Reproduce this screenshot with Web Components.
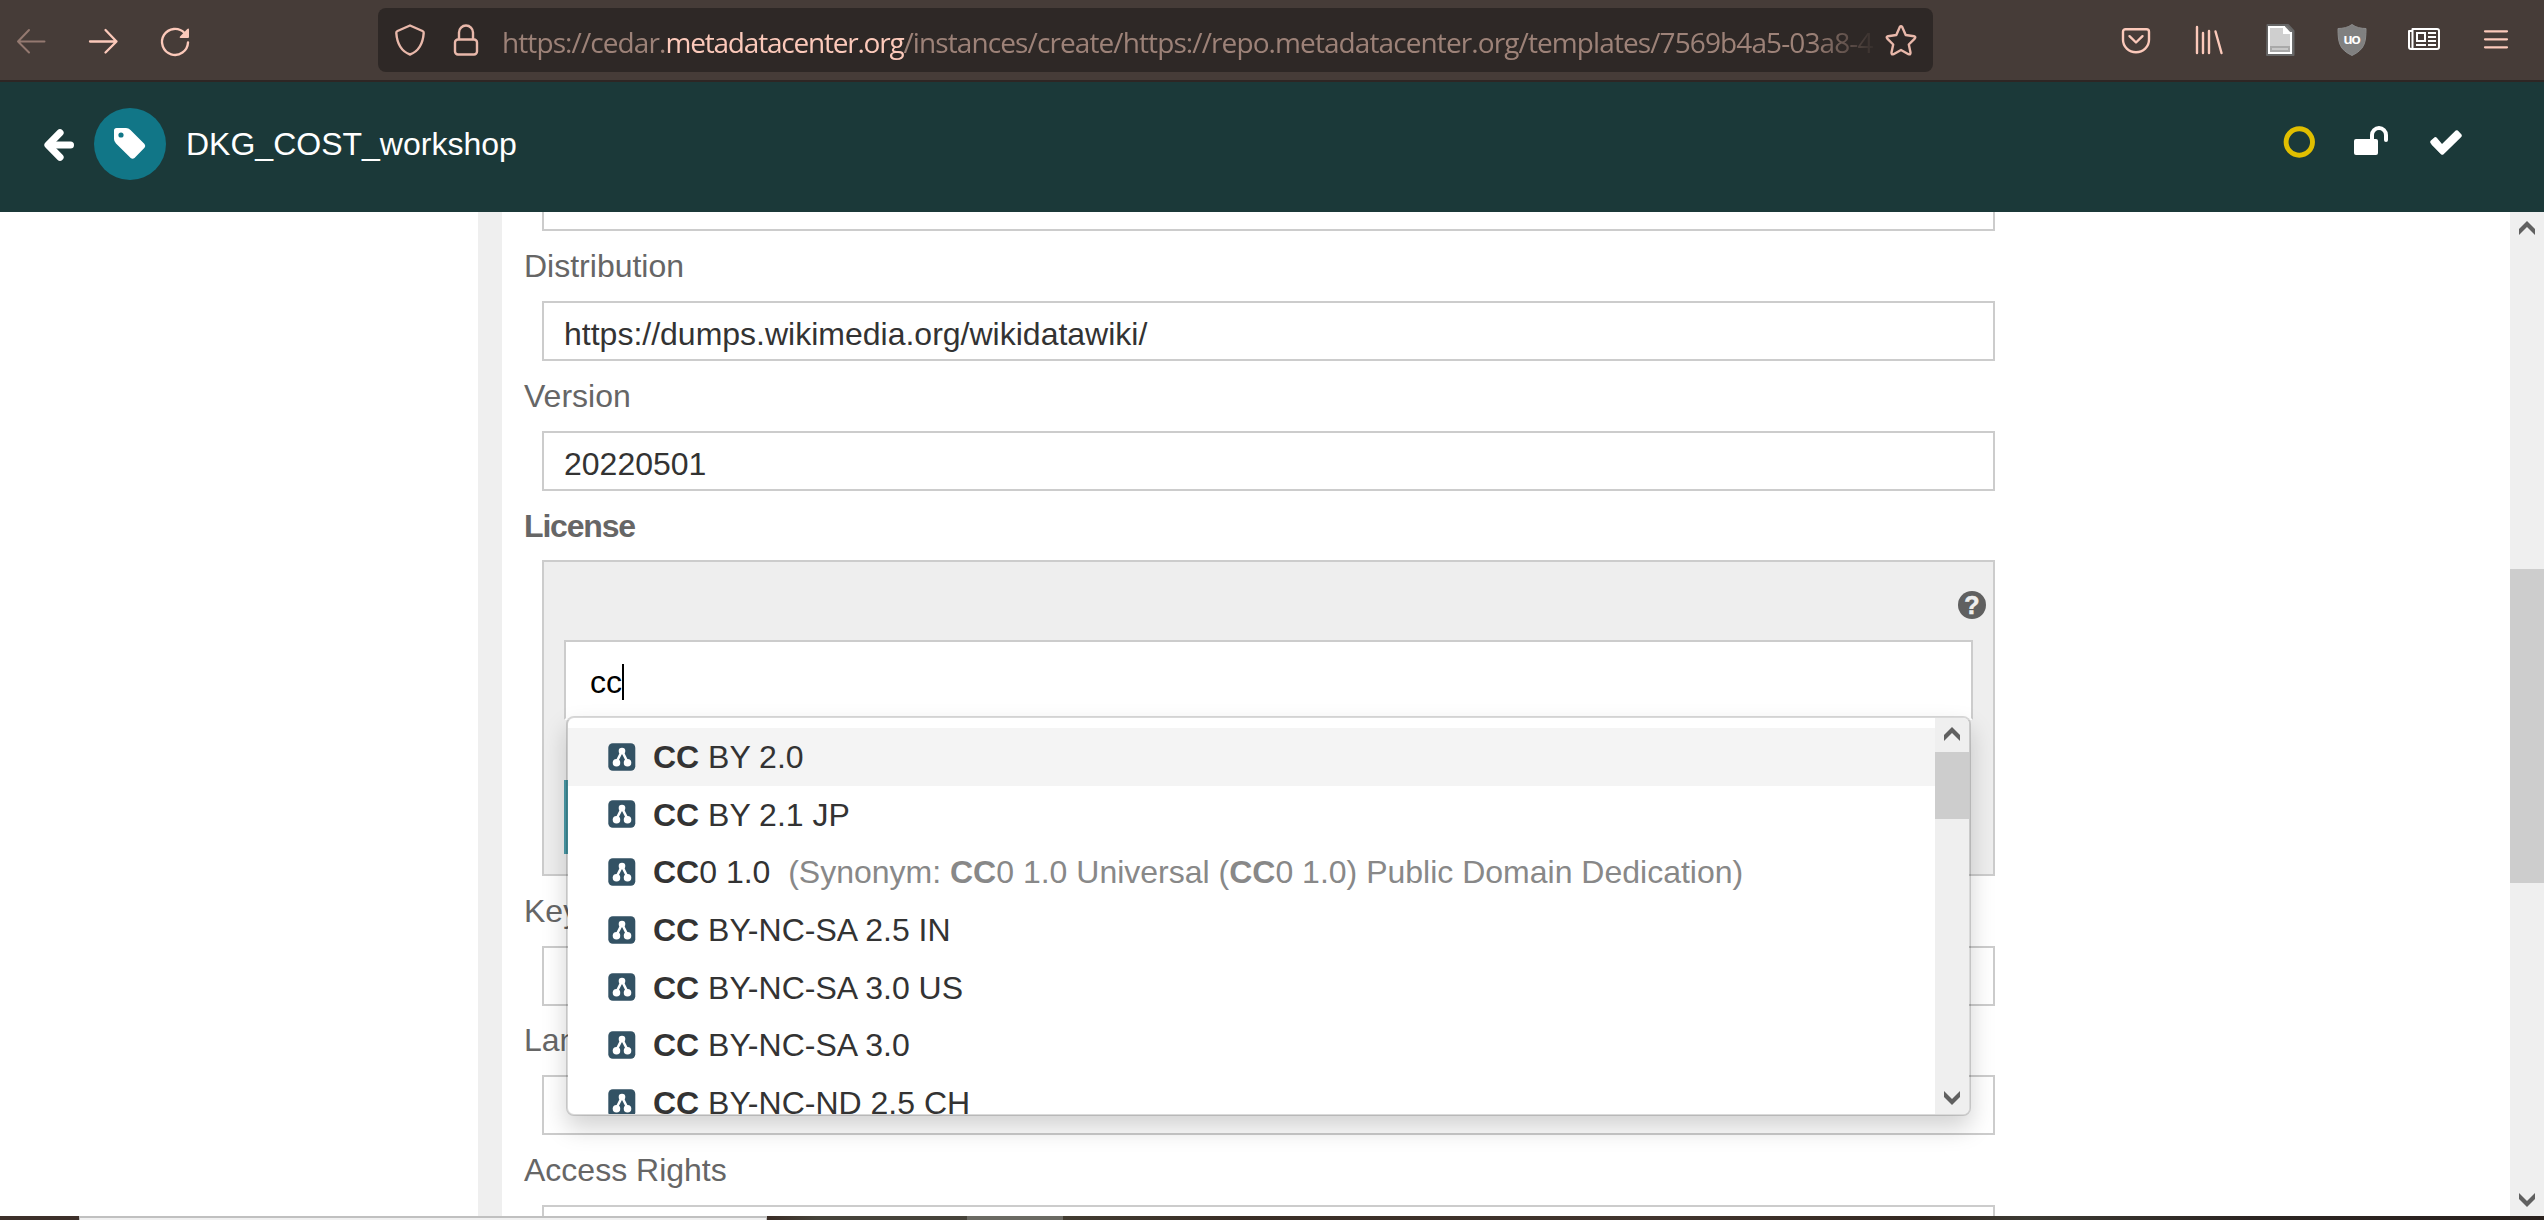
<!DOCTYPE html>
<html lang="en">
<head>
<meta charset="utf-8">
<title>DKG_COST_workshop</title>
<style>
html,body{margin:0;height:1220px;overflow:hidden;background:#fff}
body{font:32px/1.2 "Liberation Sans",Arial,sans-serif;color:#333}
</style>
</head>
<body>
<cedar-window></cedar-window>
<script>
const define=(name,html,setup)=>{
  const t=document.createElement('template');t.innerHTML=html;
  customElements.define(name,class extends HTMLElement{
    connectedCallback(){
      if(this.shadowRoot)return;
      this.attachShadow({mode:'open'}).append(t.content.cloneNode(true));
      if(setup)setup(this,this.shadowRoot);
    }
  });
};

const P='fill="none" stroke="currentColor" stroke-linecap="round" stroke-linejoin="round"';
const icons={
  back:[32,32,`<path ${P} stroke-width="2" d="M29.500 17.500H3M14 6L3 17.500L14 28.500"/>`],
  forward:[32,32,`<path ${P} stroke-width="2.300" d="M3 17.500H29.500M18.500 6L29.500 17.500L18.500 28.500"/>`],
  reload:[32,32,`<path ${P} stroke-width="2.400" d="M29 18.500A13 13 0 1 1 25.500 9"/><path fill="currentColor" d="M30 5.300V13Q30 14 29 14H21.500Q20 13.800 21 12.600L28.300 5Q29.800 4 30 5.300Z"/>`],
  shield:[32,32,`<path ${P} stroke-width="2.400" d="M16 1.500L28.500 7Q29.800 7.600 29.700 9C29 19 25.500 27 16 30.500C6.500 27 3 19 2.300 9Q2.200 7.600 3.500 7Z"/>`],
  lock:[32,32,`<rect ${P} stroke-width="2.400" x="5" y="15.500" width="22" height="15" rx="3"/><path ${P} stroke-width="2.400" d="M9 15V8.500a7 7 0 0 1 14 0V15"/>`],
  star:[32,32,`<path ${P} stroke-width="2.400" d="M14.800 3Q16 1.200 17.200 3L20.700 11L29 12.200Q31.200 12.800 29.700 14.600L23.800 20.500L25.500 28.600Q25.600 31 23.500 30.200L16 26L8.500 30.200Q6.400 31 6.500 28.600L8.200 20.500L2.300 14.600Q.8 12.800 3 12.200L11.300 11Z"/>`],
  pocket:[32,32,`<path ${P} stroke-width="2.400" d="M5.500 5.200h21a2.500 2.500 0 0 1 2.500 2.500v8a13 12.500 0 0 1-26 0v-8a2.500 2.500 0 0 1 2.500-2.500ZM9.500 12.200L16 18.500L22.500 12.200"/>`],
  library:[32,32,`<path ${P} stroke-width="2.400" d="M5 3V29M11 9V29M17 7V29M23.500 7.500L29.500 29"/>`],
  page:[32,32,`<path d="M3.500 1H24L29.500 7V31H3Z" fill="#747474" stroke="#666" stroke-width="2" stroke-linejoin="round"/><path fill="#cfcfcf" stroke="#fff" stroke-width="2" d="M5 3H20V9H27V29H5Z"/><path fill="#fff" d="M21 2.500L27 9H21Z"/><path fill="#a9a9a9" d="M6 22H26V28H6Z"/><path fill="#c8c8c8" d="M8 24H24V26H8Z"/>`],
  ublock:[32,32,`<path fill="#808080" stroke="#8b8b8b" d="M16 .5C12 3.500 7 4.500 2 4.500C2 19 3.500 25.500 16 31.500C28.500 25.500 30 19 30 4.500C25 4.500 20 3.500 16 .5Z"/><text x="15.700" y="19.500" text-anchor="middle" font-family="Lato,sans-serif" font-size="16" font-weight="700" letter-spacing="-.8" fill="#fff">uo</text>`],
  news:[32,32,`<path fill="none" stroke="#fff" stroke-width="2" stroke-linejoin="round" d="M4.500 7V23.500Q4.500 25 3 25Q1 25 1 23V7H4.500M4.500 7V5H29Q31 5 31 7V23Q31 25 29 25H3"/><path fill="none" stroke="#fff" stroke-width="2" d="M9 9H17V17H9ZM8 21H18M20 9H28M20 13H28M20 17H28M20 21H28"/>`],
  menu:[32,32,`<path ${P} stroke-width="2.200" d="M5 7.300H27M5 15.300H27M5 23.300H27"/>`],
  arrow:[32,32,`<path fill="none" stroke="#fff" stroke-width="7.200" stroke-linejoin="round" d="M17 3.800L5 16L17 28.200" stroke-linecap="round"/><path fill="none" stroke="#fff" stroke-width="7" stroke-linecap="round" d="M9 16H27.500"/>`],
  tag:[32,32,`<path fill="#fff" fill-rule="evenodd" d="M2.500 0H12Q14.500 0 16.500 2L30.500 16Q32 18 30.500 19.800L20.500 30Q18.500 31.500 16.700 30L2 15.500Q0 13.500 0 11V2.500Q0 0 2.500 0ZM7 4.400a2.600 2.600 0 1 0 0 5.200a2.600 2.600 0 1 0 0-5.200Z"/>`],
  ring:[32,32,`<circle cx="16.300" cy="16" r="13.200" fill="none" stroke="#e0be00" stroke-width="4.900"/>`],
  unlock:[34,30,`<rect y="13" width="24" height="16" rx="2" fill="#fff"/><path fill="none" stroke="#fff" stroke-width="4" stroke-linecap="round" d="M18 14V9a7 7 0 0 1 14 0v5"/>`],
  check:[32,25,`<path fill="none" stroke="#fff" stroke-width="7.300" stroke-linejoin="round" d="M4 11.800L12.200 20L28.200 4"/><path fill="#fff" d="M.6 10.700L4.600 7.200Q5.800 6.800 6.800 7.800L12 14L25.700.6Q26.800-.3 27.800.6L31.500 4.500Q32.200 5.600 31.500 6.700L13.600 24.300Q12.300 25.300 11 24.300L.6 13.300Q-.4 12 .6 10.700Z"/>`],
  help:[28,28,`<circle cx="14" cy="14" r="14" fill="#606060"/><text x="14" y="22.800" text-anchor="middle" font-family="Liberation Sans" font-size="25" font-weight="700" fill="#eee" stroke="#eee" stroke-width=".6">?</text>`],
  term:[28,28,`<rect x=".3" y=".3" width="27" height="27.400" rx="4.500" fill="#335264"/><path fill="none" stroke="#fff" stroke-width="2.600" d="M14 8L8.500 19M14 8L19.500 19"/><circle cx="14" cy="8" r="3.300" fill="#fff"/><circle cx="8.500" cy="19.800" r="3.800" fill="#fff"/><circle cx="19.500" cy="19.800" r="3.800" fill="#fff"/><path stroke="#335264" stroke-width="2.400" d="M14 16V24"/>`],
  up:[16,14,`<path fill="#606060" d="M8 0L16 8V14L8 6L0 14V8Z"/>`],
  down:[16,14,`<path fill="#606060" d="M8 14L16 6V0L8 8L0 0V6Z"/>`]
};
define('ui-icon','<style>:host{display:block;flex:none}svg{display:block;overflow:visible}</style>',(el,root)=>{
  const [w,h,body]=icons[el.getAttribute('name')];
  root.innerHTML+=`<svg width="${w}" height="${h}" viewBox="0 0 ${w} ${h}">${body}</svg>`;
});

/* Spreads a run of text over a fixed advance width. */
define('fit-text','<style>:host{display:inline-block;white-space:nowrap}span{display:inline-block}</style><span><slot></slot></span>',(el,root)=>{
  const span=root.querySelector('span'),w=+el.getAttribute('width');
  const n=el.textContent.length;
  span.style.letterSpacing=((w-span.getBoundingClientRect().width)/n)+'px';
  el.style.width=w+'px';
});

define('browser-bar',`<style>
:host{display:flex;align-items:center;box-sizing:border-box;height:82px;padding:0 32px 0 15px;background:#463c38;border-bottom:2px solid #2e2624;color:#fcc9ba}
.nav,.tools{display:flex;gap:40px}
.dim{color:#947970}
.url{display:flex;align-items:center;box-sizing:border-box;width:1555px;height:64px;margin-left:187px;padding:0 16px;background:#2e2826;border-radius:8px;color:#e9b8aa}
.url ui-icon+ui-icon{margin-left:24px}
.text{display:flex;width:1371px;margin:0 12px 0 20px;padding-top:4px;overflow:hidden;font:28px/40px "Open Sans","Noto Sans",sans-serif;color:#9d8278;-webkit-mask-image:linear-gradient(90deg,#000 1310px,transparent 1376px);mask-image:linear-gradient(90deg,#000 1310px,transparent 1376px)}
.text b{font-weight:400;color:#fcc9ba}
.tools{margin-left:187px}
</style>
<div class="nav"><ui-icon class="dim" name="back"></ui-icon><ui-icon name="forward"></ui-icon><ui-icon name="reload"></ui-icon></div>
<div class="url"><ui-icon name="shield"></ui-icon><ui-icon name="lock"></ui-icon>
<div class="text"><fit-text width="163.500">https://cedar.</fit-text><b><fit-text width="238">metadatacenter.org</fit-text></b><fit-text width="969">/instances/create/https://repo.metadatacenter.org/templates/7569b4a5-03a8-4</fit-text></div>
<ui-icon name="star"></ui-icon></div>
<div class="tools"><ui-icon name="pocket"></ui-icon><ui-icon name="library"></ui-icon><ui-icon name="page"></ui-icon><ui-icon name="ublock"></ui-icon><ui-icon name="news"></ui-icon><ui-icon name="menu"></ui-icon></div>`);

define('app-header',`<style>
:host{display:flex;align-items:center;box-sizing:border-box;height:130px;padding:0 82px 6px 43px;background:#1b3939;color:#fff}
.back{margin-top:2px}
.badge{display:flex;align-items:center;justify-content:center;width:72px;height:72px;margin:0 20px 0 19px;border-radius:50%;background:#117687}
.actions{display:flex;align-items:center;margin:-4px 0 0 auto}
.lock{margin:-3px 42px 0 39px}
</style>
<ui-icon class="back" name="arrow"></ui-icon><div class="badge"><ui-icon name="tag"></ui-icon></div><span><slot></slot></span>
<div class="actions"><ui-icon name="ring"></ui-icon><ui-icon class="lock" name="unlock"></ui-icon><ui-icon name="check"></ui-icon></div>`);

define('scroll-bar',`<style>
:host{display:flex;flex-direction:column;align-items:center;flex:none;box-sizing:border-box;width:34px;background:#efefef;padding:9px 0}
.thumb{width:34px;margin-top:var(--offset);height:var(--thumb);background:#cdcdcd}
.down{margin-top:auto}
</style><ui-icon name="up"></ui-icon><div class="thumb"></div><ui-icon class="down" name="down"></ui-icon>`);

define('form-field',`<style>
:host{display:block}
.label{height:var(--label,70px);line-height:var(--line,70px);padding-left:22px;color:#666}
.box{display:flex;align-items:center;box-sizing:border-box;width:1453px;height:60px;margin-left:40px;padding:6px 20px 0;border:2px solid #ccc;background:#fff;color:#333}
</style><div class="label"></div><div class="box"><slot></slot></div>`,(el,root)=>{
  root.querySelector('.label').textContent=el.getAttribute('label');
});

define('term-option',`<style>
:host{display:flex;align-items:center;height:57.670px;padding-left:40px;gap:17px;white-space:pre;color:#333}
:host([active]){background:#f4f4f4}
::slotted(i){font-style:normal;color:#888}
span{padding-top:1px}
</style><ui-icon name="term"></ui-icon><span><slot></slot></span>`);

define('term-menu',`<style>
:host{display:flex;box-sizing:border-box;width:1405px;height:400px;border:2px solid rgba(0,0,0,.15);border-radius:8px;background:#fff;background-clip:padding-box;box-shadow:0 12px 24px rgba(0,0,0,.175);overflow:hidden}
.list{flex:1;padding-top:10px;overflow:hidden}
scroll-bar{--offset:11px;--thumb:67px}
</style>
<div class="list">
<term-option active><b>CC</b> BY 2.0</term-option>
<term-option><b>CC</b> BY 2.1 JP</term-option>
<term-option><b>CC</b>0 1.0  <i>(Synonym: <b>CC</b>0 1.0 Universal (<b>CC</b>0 1.0) Public Domain Dedication)</i></term-option>
<term-option><b>CC</b> BY-NC-SA 2.5 IN</term-option>
<term-option><b>CC</b> BY-NC-SA 3.0 US</term-option>
<term-option><b>CC</b> BY-NC-SA 3.0</term-option>
<term-option><b>CC</b> BY-NC-ND 2.5 CH</term-option>
</div><scroll-bar></scroll-bar>`);

define('license-field',`<style>
:host{display:block}
.label{height:69px;line-height:70px;padding-left:22px;color:#666;font-weight:700}
.card{position:relative;box-sizing:border-box;width:1453px;height:316px;margin-left:40px;padding:29px 20px 0;border:2px solid #ccc;background:#eee}
.help{display:flex;justify-content:flex-end;height:49px;margin-right:-13px}
.input{display:flex;align-items:center;box-sizing:border-box;height:80px;padding-left:24px;border:2px solid #ccc;border-bottom-color:#fff;background:#fff;color:#000}
.caret{width:2px;height:36px;margin-top:4px;background:#000}
.input span{padding-top:5px}
.button{width:300px;height:74px;margin-top:60px;background:#4b9ca9}
term-menu{position:absolute;left:22px;top:154px;z-index:5}
</style>
<div class="label"><fit-text width="111">License</fit-text></div>
<div class="card"><div class="help"><ui-icon name="help"></ui-icon></div>
<div class="input"><span>cc</span><div class="caret"></div></div>
<div class="button"></div><term-menu></term-menu></div>`);

define('task-strip',`<style>
:host{display:flex;height:4px;background:#40392f}
div{box-sizing:border-box}
.a{width:79px;background:#3d302a}.b{width:688px;background:#f1f1f1;border:solid #c0c0c0;border-width:2px 1px 0}
.c{width:200px;background:linear-gradient(90deg,#3a2c25,#46433a 25%)}.d{width:96px;background:#6b6a63}.e{flex:1;background:linear-gradient(90deg,#423c31,#3a2e26 12%,#42352e 40%,#352922 58%,#3c3a33 65%,#2c2522 80%,#2a211e)}
</style><div class="a"></div><div class="b"></div><div class="c"></div><div class="d"></div><div class="e"></div>`);

define('cedar-window',`<style>
:host{display:flex;flex-direction:column;width:2544px;height:1220px;overflow:hidden}
main{display:flex;height:1004px;overflow:hidden;background:#fff}
.side{width:478px;border-right:24px solid #efefef}
.form{flex:1;overflow:hidden}
.tail{box-sizing:border-box;width:1453px;height:19px;margin-left:40px;border:2px solid #ccc;border-top:0}
main>scroll-bar{--offset:334px;--thumb:314px}
.tight{--label:69px;--line:68px}
</style>
<browser-bar></browser-bar><app-header>DKG_COST_workshop</app-header>
<main><div class="side"></div><div class="form"><div class="tail"></div>
<form-field label="Distribution">https://dumps.wikimedia.org/wikidatawiki/</form-field>
<form-field label="Version">20220501</form-field>
<license-field></license-field>
<form-field label="Keywords"></form-field>
<form-field class="tight" label="Language"></form-field>
<form-field label="Access Rights"></form-field>
</div><scroll-bar></scroll-bar></main><task-strip></task-strip>`);
</script>
</body>
</html>
